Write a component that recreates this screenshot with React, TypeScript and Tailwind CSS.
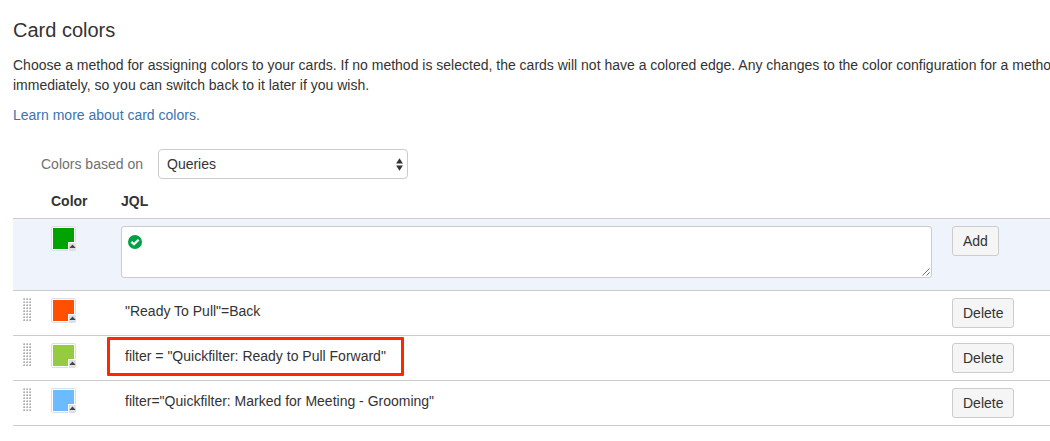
const queries = [
  { id: 1, color: "bg-[#ff4f00]", jql: '"Ready To Pull"=Back', marked: false },
  { id: 2, color: "bg-[#95cb41]", jql: 'filter = "Quickfilter: Ready to Pull Forward"', marked: true },
  { id: 3, color: "bg-[#6cbaff]", jql: 'filter="Quickfilter: Marked for Meeting - Grooming"', marked: false },
];

function Swatch({ color }: { color: string }) {
  return (
    <button className="relative block size-[25px] rounded-[2px] border border-[#dadee5] bg-white p-px">
      <span className={`block size-[21px] ${color}`} />
      <span className="absolute -right-px -bottom-px flex h-[9px] w-2 items-center justify-center rounded-br-[2px] border-t border-l border-white bg-[#dde0e6]">
        <svg width="7" height="8" viewBox="0 0 7 8">
          <path d="M3.5 1.6 L6.3 4.4 V5 H0.7 V4.4 Z" fill="#444" />
        </svg>
      </span>
    </button>
  );
}

function Grip() {
  const rows = [0, 1, 2, 3, 4, 5, 6, 7];
  const cols = [0, 1, 2];
  return (
    <svg width="9" height="24" viewBox="0 0 9 24" shapeRendering="crispEdges">
      {rows.map((r) =>
        cols.map((c) => (
          <g key={`${r}-${c}`}>
            <rect x={c * 3} y={r * 3} width="2" height="2" fill="#dedede" />
            <rect x={c * 3 + 1} y={r * 3} width="1" height="1" fill="#c6c6c6" />
            <rect x={c * 3} y={r * 3 + 1} width="1" height="1" fill="#c0c0c0" />
            <rect x={c * 3 + 1} y={r * 3 + 1} width="1" height="1" fill="#acacac" />
          </g>
        ))
      )}
    </svg>
  );
}

function Button({ label }: { label: string }) {
  return (
    <button className="h-[30px] rounded-[3px] border border-[#ccc] bg-[#f5f5f5] px-[10px] leading-5">
      {label}
    </button>
  );
}

export default function App() {
  return (
    <main className="h-[441px] overflow-hidden bg-white pl-[13px] font-['Liberation_Sans',Arial,sans-serif] text-[14px] leading-5 text-[#333]">
      <h2 className="pt-[18px] text-[20px] leading-6">Card colors</h2>
      <p className="mt-[13px] whitespace-nowrap">
        Choose a method for assigning colors to your cards. If no method is selected, the cards will not have a colored edge. Any changes to the color configuration for a method
        <br />
        immediately, so you can switch back to it later if you wish.
      </p>
      <p className="mt-[10px]">
        <a className="text-[#3b73af]">Learn more about card colors.</a>
      </p>

      <div className="mt-6 flex h-[30px] items-center">
        <span className="w-[145px] pl-7 text-[#707070]">Colors based on</span>
        <div className="flex h-[30px] w-[250px] items-center justify-between rounded-[4px] border border-[#ccc] bg-white pr-1 pl-2">
          <span>Queries</span>
          <svg width="7" height="13" viewBox="0 0 7 13">
            <path d="M3.5 0.3 L6.9 5.5 H0.1 Z M3.5 12.7 L6.9 7.5 H0.1 Z" fill="#333" />
          </svg>
        </div>
      </div>

      <div className="mt-[7px]">
        <div className="grid h-[33px] grid-cols-[38px_70px_1fr] border-b border-[#ccc] pt-[5px] font-bold">
          <span />
          <span>Color</span>
          <span>JQL</span>
        </div>

        <div className="grid h-[72px] grid-cols-[38px_70px_831px_1fr] items-start border-b border-[#ccc] bg-[#eff3fb] pt-[7px]">
          <span />
          <Swatch color="bg-[#00a200]" />
          <div className="flex h-[52px] w-[811px] items-start justify-between rounded-[3px] border border-[#ccc] bg-white">
            <svg className="mt-2 ml-[6px]" width="14" height="14" viewBox="0 0 14 14">
              <circle cx="7" cy="7" r="7" fill="#00a144" />
              <path d="M3.4 6.9 L6 9.3 L10.7 4.7" fill="none" stroke="#fff" strokeWidth="2.2" />
            </svg>
            <svg className="mr-px self-end" width="8" height="9" viewBox="0 0 8 9">
              <path d="M0.5 7.5 L7.5 0.5 M4.5 7.5 L7.5 4.5" fill="none" stroke="#666" strokeWidth="0.9" />
            </svg>
          </div>
          <div>
            <Button label="Add" />
          </div>
        </div>

        {queries.map((q) => (
          <div key={q.id} className="grid h-[45px] grid-cols-[10px_28px_70px_831px_1fr] items-start border-b border-[#ccc] pt-[7px]">
            <span />
            <Grip />
            <Swatch color={q.color} />
            <div className="relative pt-[3px] pl-1">
              {q.marked && (
                <span className="absolute -top-[6px] -left-[14px] h-[39px] w-[297px] rounded-[1px] border-[3px] border-[#ff2600]" />
              )}
              {q.jql}
            </div>
            <div>
              <Button label="Delete" />
            </div>
          </div>
        ))}
      </div>
    </main>
  );
}
